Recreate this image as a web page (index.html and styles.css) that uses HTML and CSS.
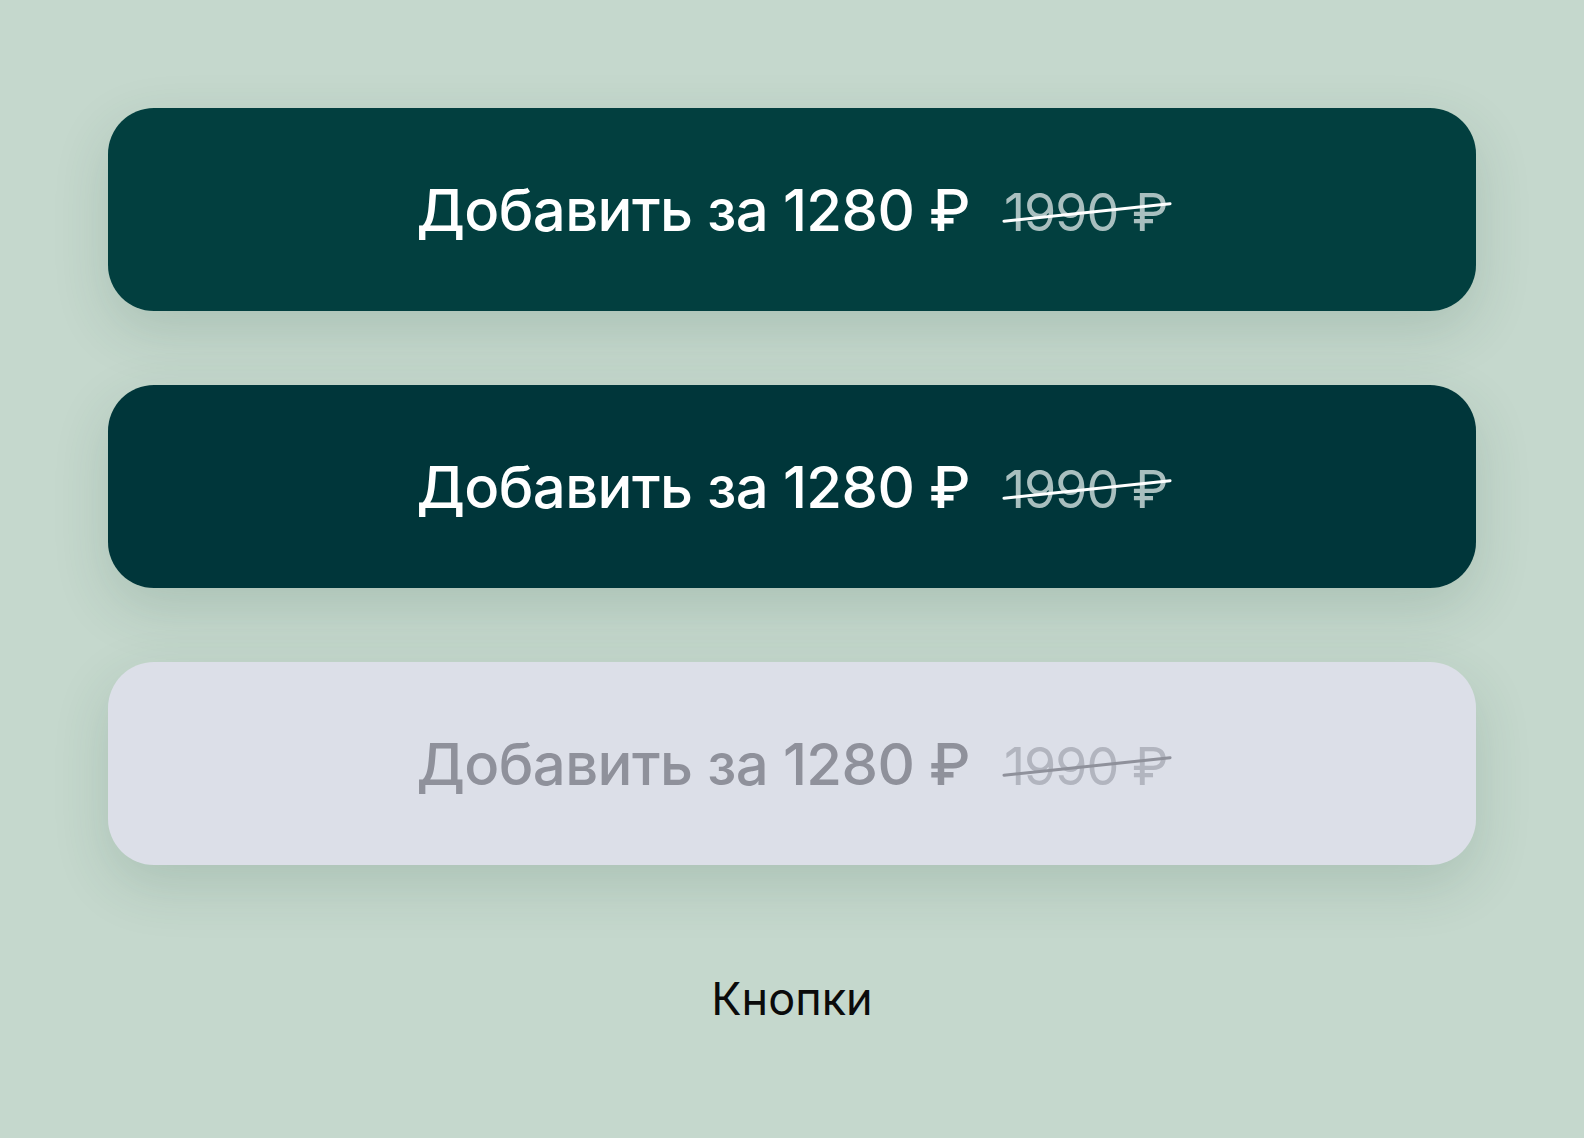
FILE: index.html
```html
<!DOCTYPE html>
<html lang="ru">
<head>
    <meta charset="UTF-8">
    <meta name="viewport" content="width=device-width, initial-scale=1.0">
    <title>Кнопки</title>
    <link rel="stylesheet" href="styles.css">
</head>
<body>
    <div class="buttons">
        <button class="btn btn-default">
            <span class="price">Добавить за 1280 ₽</span>
            <span class="old-price">1990 ₽</span>
        </button>
        <button class="btn btn-pressed">
            <span class="price">Добавить за 1280 ₽</span>
            <span class="old-price">1990 ₽</span>
        </button>
        <button class="btn btn-disabled" disabled>
            <span class="price">Добавить за 1280 ₽</span>
            <span class="old-price">1990 ₽</span>
        </button>
    </div>
    <p class="caption">Кнопки</p>
</body>
</html>
```

FILE: styles.css
```css
body {
    margin: 0;
    padding: 108px 108px 0;
    height: 1138px;
    box-sizing: border-box;
    background-color: #c5d8cd;
    font-family: Inter, "Noto Sans", sans-serif;
}
.buttons {
    display: flex;
    flex-direction: column;
    gap: 74px;
}
.btn {
    display: flex;
    justify-content: center;
    align-items: center;
    gap: 34px;
    height: 203px;
    width: 100%;
    border: none;
    border-radius: 46px;
    font-family: inherit;
    box-shadow: 0 20px 56px rgba(40, 80, 60, 0.16);
    cursor: pointer;
}
.btn-default {
    background-color: #023f3f;
    color: #ffffff;
}
.btn-pressed {
    background-color: #00363a;
    color: #ffffff;
}
.btn-disabled {
    background-color: #dcdfe8;
    color: #8f919b;
    cursor: default;
}
.price {
    font-size: 58px;
    font-weight: 500;
    letter-spacing: -0.6px;
}
.old-price {
    position: relative;
    font-size: 52px;
    font-weight: 400;
    letter-spacing: -1px;
    margin-top: 6px;
}
/* slanted strike line across the old price */
.old-price::after {
    content: "";
    position: absolute;
    left: -2px;
    right: -4px;
    top: 48%;
    height: 3px;
    border-radius: 2px;
    background: currentColor;
    transform: rotate(-6deg);
}
.btn-default .old-price,
.btn-pressed .old-price {
    color: #a9bfbf;
}
.btn-default .old-price::after,
.btn-pressed .old-price::after {
    background: #ffffff;
}
.btn-disabled .old-price {
    color: #b2b5bf;
}
.btn-disabled .old-price::after {
    background: #8f919b;
}
.caption {
    margin: 106px 0 0;
    text-align: center;
    font-size: 45px;
    color: #0b0b0b;
}
```
